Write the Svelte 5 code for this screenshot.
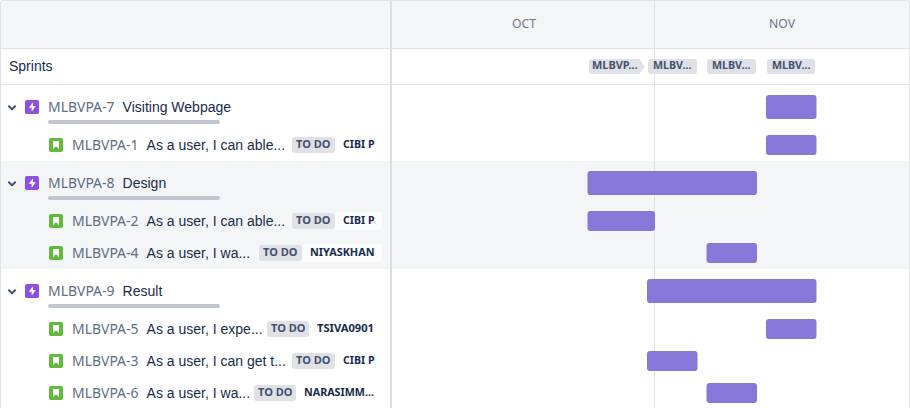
<script>
  const ORIGIN = 392;
  const sprints = [
    { label: 'MLBVP...', gap: 196.5, width: 56, arrow: true, pad: 3.5, text: 45.5 },
    { label: 'MLBV...', gap: 3.3, width: 49, pad: 5, text: 38.5 },
    { label: 'MLBV...', gap: 10.4, width: 49, pad: 5, text: 38.5 },
    { label: 'MLBV...', gap: 10.6, width: 48.6, pad: 5, text: 38.5 }
  ];
  const groups = [
    {
      key: 'MLBVPA-7', name: 'Visiting Webpage', start: 766, end: 816.5,
      items: [
        { key: 'MLBVPA-1', name: 'As a user, I can able...', who: 'CIBI P', w: 31.5, start: 766, end: 816.5 }
      ]
    },
    {
      key: 'MLBVPA-8', name: 'Design', start: 587.5, end: 757, shaded: true,
      items: [
        { key: 'MLBVPA-2', name: 'As a user, I can able...', who: 'CIBI P', w: 31.5, start: 587.5, end: 655 },
        { key: 'MLBVPA-4', name: 'As a user, I wa...', who: 'NIYASKHAN', w: 64.5, start: 706.5, end: 757 }
      ]
    },
    {
      key: 'MLBVPA-9', name: 'Result', start: 647, end: 816.5,
      items: [
        { key: 'MLBVPA-5', name: 'As a user, I expe...', who: 'TSIVA0901', w: 57, start: 766, end: 816.5 },
        { key: 'MLBVPA-3', name: 'As a user, I can get t...', who: 'CIBI P', w: 31.5, start: 647, end: 697.5 },
        { key: 'MLBVPA-6', name: 'As a user, I wa...', who: 'NARASIMM...', w: 70, start: 706.5, end: 757 }
      ]
    }
  ];

  // Scales a text run horizontally so that it fills the given width.
  function fit(node, width) {
    const span = node.firstElementChild;
    const natural = span.getBoundingClientRect().width;
    if (natural) span.style.transform = `scaleX(${width / natural})`;
  }
</script>

{#snippet bar(b)}
  <div class="lane">
    <svg class="bar" style:width="{b.end - ORIGIN + 1}px">
      <rect x={b.start - ORIGIN} y="0" width={b.end - b.start} height="100%" rx="3" fill="#8777d9" />
    </svg>
  </div>
{/snippet}

<div class="roadmap">
  <div class="head">
    <div class="side"></div>
    <div class="month oct"><span class="fit" use:fit={24} style:width="24px"><span>OCT</span></span></div>
    <div class="month nov"><span class="fit" use:fit={26} style:width="26px"><span>NOV</span></span></div>
  </div>

  <div class="sprints">
    <div class="side title">Sprints</div>
    <div class="lane">
      {#each sprints as s}
        <div class="sprint" class:arrow={s.arrow} style:margin-left="{s.gap}px" style:width="{s.width}px" style:padding-left="{s.pad}px">
          <span class="fit" use:fit={s.text} style:width="{s.text}px"><span>{s.label}</span></span>
        </div>
      {/each}
    </div>
  </div>

  {#each groups as g}
    <div class="group" class:shaded={g.shaded}>
      <div class="row epic">
        <div class="side">
          <svg class="chevron" width="10" height="6" viewBox="0 0 10 6"><path d="M1.9 1.2 5 4.2l3.1-3" fill="none" stroke="#42526e" stroke-width="1.9" stroke-linecap="round" stroke-linejoin="round" /></svg>
          <svg class="type" width="14" height="14" viewBox="0 0 14 14">
            <rect width="14" height="14" rx="1.8" fill="#904ee2" />
            <path d="M7.6 2.8 4.1 7.2c-.2.3 0 .6.3.6h2.2v3.1c0 .4.4.5.6.2l3.1-4.4c.2-.3 0-.6-.3-.6H8V3c0-.3-.2-.4-.4-.2z" fill="#fff" />
          </svg>
          <div class="text">
            <div class="line">
              <span class="key fit" use:fit={66.5}><span>{g.key}</span></span>
              <span class="name">{g.name}</span>
            </div>
            <div class="progress"></div>
          </div>
        </div>
        {@render bar(g)}
      </div>

      {#each g.items as it}
        <div class="row story">
          <div class="side">
            <svg class="type" width="14" height="14" viewBox="0 0 14 14">
              <rect width="14" height="14" rx="1.8" fill="#63ba3c" />
              <path d="M4 4c0-.6.4-1 1-1h4c.6 0 1 .4 1 1v7L7 8.2 4 11z" fill="#fff" />
            </svg>
            <span class="key fit" use:fit={66.5}><span>{it.key}</span></span>
            <span class="name">{it.name}</span>
            <span class="status"><span class="fit" use:fit={34.5} style:width="34.5px"><span>TO DO</span></span></span>
            <span class="who" style:width="{it.w + 16}px"><span class="fit" use:fit={it.w} style:width="{it.w}px"><span>{it.who}</span></span></span>
          </div>
          {@render bar(it)}
        </div>
      {/each}
    </div>
  {/each}
</div>

<style>
  :global(body) { overflow: hidden; background: #fff; }
  .roadmap, .roadmap :global(*) { box-sizing: border-box; }
  .roadmap {
    position: relative;
    width: 910px;
    height: 408px;
    overflow: hidden;
    border: 1px solid #dfe0e8;
    border-bottom: 0;
    border-radius: 3px 3px 0 0;
    font: 14px/20px "Liberation Sans", Arial, sans-serif;
    color: #172b4d;
  }
  .roadmap::after {
    content: "";
    position: absolute;
    left: 653px;
    top: 0;
    bottom: 0;
    width: 1px;
    background: #dfe0e8;
    z-index: 0;
  }
  .head, .sprints, .row { display: flex; }
  .side {
    flex: 0 0 391px;
    min-width: 0;
    display: flex;
    border-right: 2px solid #dcdde5;
  }
  .head { height: 48px; background: #f4f5f7; border-bottom: 1px solid #dfe0e8; }
  .month {
    display: flex;
    align-items: center;
    justify-content: center;
    padding: 0 0 2px 1px;
    font: 12px/16px "Noto Sans", sans-serif;
    color: #6b778c;
  }
  .oct { width: 263px; }
  .nov { width: 255px; }
  .sprints { height: 36px; border-bottom: 1px solid #dfe0e8; }
  .title { align-items: center; padding-left: 8px; padding-bottom: 1px; }
  .lane { flex: 1; display: flex; align-items: center; min-width: 0; }
  .sprint {
    position: relative;
    z-index: 1;
    flex: none;
    height: 15px;
    border-radius: 3px;
    background: #dfe1e7;
    color: #42526e;
    font: 700 11px/12px "Noto Sans", sans-serif;
  }
  .arrow { clip-path: polygon(0 0, 51px 0, 100% 50%, 51px 100%, 0 100%); }
  .fit { display: block; white-space: nowrap; flex: none; }
  .fit > span { display: block; width: max-content; transform-origin: 0 50%; }
  .shaded { background: #f4f5f7; }
  .row .side { padding-right: 8px; }
  .epic { height: 44px; }
  .epic .side { padding-left: 6px; }
  .story { height: 32px; }
  .story .side { align-items: center; padding-left: 48px; }
  .chevron { flex: none; margin: 20px 8px 0 0; }
  .type { flex: none; }
  .epic .type { margin: 15px 9px 0 0; }
  .story .type { margin-right: 9px; }
  .text { padding-top: 12px; }
  .line { display: flex; }
  .key { width: 74.6px; color: #5e6c84; font: 14px/20px "Noto Sans", sans-serif; }
  .name { white-space: nowrap; }
  .progress { width: 172px; height: 4px; margin-top: 3px; border-radius: 2px; background: #c1c5d0; }
  .status {
    flex: none;
    margin-left: auto;
    width: 42.5px;
    height: 16px;
    padding-left: 4px;
    border-radius: 3px;
    background: #dfe1e7;
    color: #42526e;
    font: 700 11px/14px "Noto Sans", sans-serif;
  }
  .who {
    flex: none;
    height: 18px;
    padding: 0 8px;
    border-radius: 3px;
    color: #172b4d;
    font: 700 11px/16px "Noto Sans", sans-serif;
  }
  .shaded .who { background: #fcfcfd; }
  .bar {
    position: relative;
    z-index: 1;
    flex: none;
    height: 20px;
  }
  .epic .bar { height: 24px; }
</style>
